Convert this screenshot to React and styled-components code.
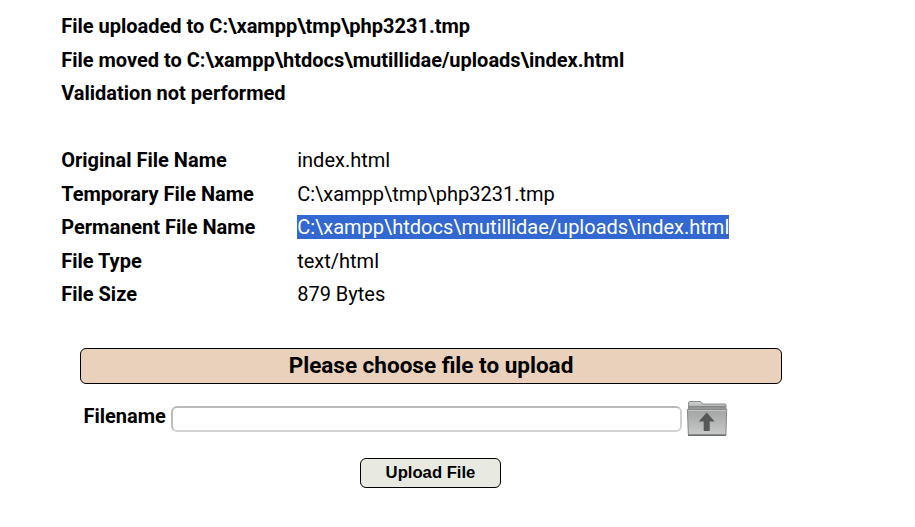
import React from "react";
import styled, { createGlobalStyle } from "styled-components";

const GlobalStyle = createGlobalStyle`
  body { margin: 0; background: #fff; overflow: hidden; }
  * { box-sizing: border-box; }
`;
const Page = styled.main`
  width: 915px;
  height: 527px;
  padding-top: 10px;
  font: 20px/33.5px Roboto, sans-serif;
  color: #000;
  background: #fff;
`;
const Messages = styled.section`
  margin-left: 61.2px;
  font-weight: 700;
`;
const Message = styled.div`
  height: 33.5px;
  white-space: nowrap;
`;
const Details = styled.dl`
  display: grid;
  grid-template-columns: 236px 1fr;
  grid-auto-rows: 33.5px;
  margin: 33.5px 0 0 61.2px;
`;
const Label = styled.dt`
  font-weight: 700;
`;
const Value = styled.dd`
  margin: 0;
`;
const Selected = styled.span`
  background: #3367d1;
  color: #fff;
`;
const UploadForm = styled.form`
  width: 702px;
  margin: 36px 0 0 80px;
`;
const FormHeader = styled.h2`
  height: 36px;
  margin: 0;
  border: 1px solid #000;
  border-radius: 6px;
  background: #e9d1bb;
  font-size: 22.5px;
  line-height: 33px;
  text-align: center;
`;
const FileRow = styled.div`
  display: flex;
  align-items: center;
  margin: 15px 0 0 3.5px;
  height: 40px;
`;
const FileLabel = styled.label`
  width: 87.5px;
  font-weight: 700;
  margin-top: -4px;
`;
const FileInput = styled.input`
  width: 511px;
  height: 26px;
  border: 2px solid;
  border-color: #b9b9b9 #cfcfcf #d3d3d3 #bebebe;
  border-radius: 6px;
  background: #fff;
`;
const FolderIcon = styled.svg`
  width: 42px;
  height: 38px;
  margin-left: 4px;
`;
const Submit = styled.button`
  display: block;
  width: 141px;
  height: 30px;
  margin: 19px 0 0 280px;
  padding: 0;
  border: 1px solid #000;
  border-radius: 6px;
  background: #e8eae1;
  color: #000;
  font: 700 16.67px "Liberation Sans", sans-serif;
`;

const messages = [
  "File uploaded to C:\\xampp\\tmp\\php3231.tmp",
  "File moved to C:\\xampp\\htdocs\\mutillidae/uploads\\index.html",
  "Validation not performed",
];
const details = [
  ["Original File Name", "index.html"],
  ["Temporary File Name", "C:\\xampp\\tmp\\php3231.tmp"],
  ["Permanent File Name", "C:\\xampp\\htdocs\\mutillidae/uploads\\index.html", true],
  ["File Type", "text/html"],
  ["File Size", "879 Bytes"],
];

function UploadFolder() {
  return (
    <FolderIcon viewBox="0 0 42 38" aria-hidden="true">
      <defs>
        <linearGradient id="folderFront" x1="0" y1="0" x2="0" y2="1">
          <stop offset="0" stopColor="#a2a4a3" />
          <stop offset="0.6" stopColor="#b9bbba" />
          <stop offset="1" stopColor="#c9cbca" />
        </linearGradient>
        <linearGradient id="folderBack" x1="0" y1="0" x2="0" y2="1">
          <stop offset="0" stopColor="#d2d3d2" />
          <stop offset="1" stopColor="#a2a4a3" />
        </linearGradient>
      </defs>
      <path d="M2.5 9V3.2Q2.5 1.5 4 1.5h10q1 0 1.6 1L16.6 4H39q1 0 1 1v4z" fill="url(#folderBack)" stroke="#8b8d8c" />
      <path d="M3 6.8h36.5" stroke="#777978" strokeWidth="1.2" />
      <path d="M1.4 9.5h39.3L39.9 35H2.4z" fill="url(#folderFront)" stroke="#858786" />
      <path d="M2 10.5h38" stroke="#c4c6c5" />
      <path d="M2 35.3h38" stroke="#6f7170" strokeWidth="1.4" />
      <path d="m20.7 12.4 8 9.2h-5V31h-6v-9.4h-5z" fill="#565857" />
    </FolderIcon>
  );
}

export default function App() {
  return (
    <Page>
      <GlobalStyle />
      <Messages>{messages.map((m) => <Message key={m}>{m}</Message>)}</Messages>
      <Details>
        {details.map(([label, value, selected]) => (
          <React.Fragment key={label}>
            <Label>{label}</Label>
            <Value>{selected ? <Selected>{value}</Selected> : value}</Value>
          </React.Fragment>
        ))}
      </Details>
      <UploadForm>
        <FormHeader>Please choose file to upload</FormHeader>
        <FileRow>
          <FileLabel htmlFor="filename">Filename</FileLabel>
          <FileInput id="filename" />
          <UploadFolder />
        </FileRow>
        <Submit type="button">Upload File</Submit>
      </UploadForm>
    </Page>
  );
}
